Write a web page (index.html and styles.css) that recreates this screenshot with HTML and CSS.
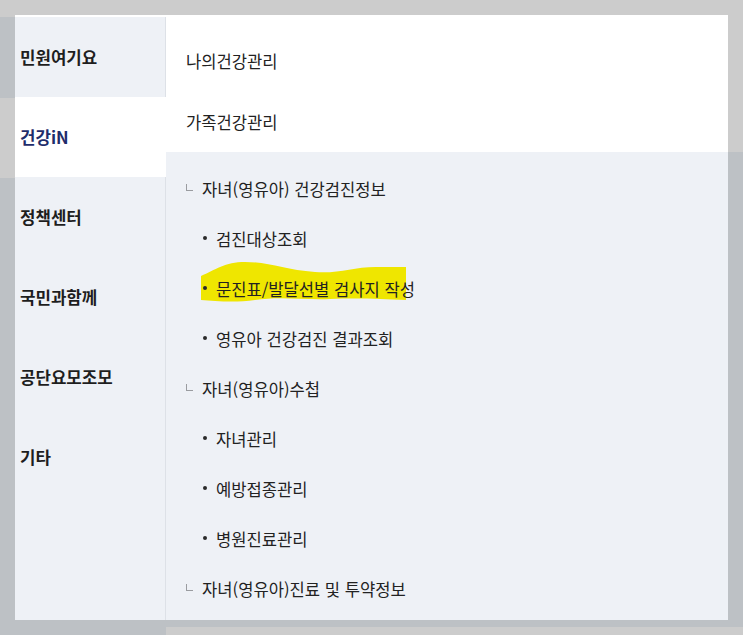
FILE: index.html
```html
<!DOCTYPE html>
<html lang="ko">
<head>
    <meta charset="UTF-8">
    <title>건강iN 메뉴</title>
    <link rel="stylesheet" href="styles.css">
</head>
<body>
    <!-- dimmed page behind the menu -->
    <div class="backdrop">
        <div class="bd-left">
            <div class="bd light" style="height: 17px"></div>
            <div class="bd dark" style="height: 81px"></div>
            <div class="bd light" style="height: 80px"></div>
            <div class="bd dark fill"></div>
        </div>
        <div class="bd-right">
            <div class="bd light" style="height: 152px"></div>
            <div class="bd dark" style="height: 475px"></div>
            <div class="bd light fill"></div>
        </div>
    </div>

    <!-- Menu Panel -->
    <div class="menu-panel">
        <ul class="gnb">
            <li>민원여기요</li>
            <li class="active">건강iN</li>
            <li>정책센터</li>
            <li>국민과함께</li>
            <li>공단요모조모</li>
            <li>기타</li>
        </ul>

        <div class="sub">
            <ul class="sub-top">
                <li>나의건강관리</li>
                <li>가족건강관리</li>
            </ul>

            <ul class="sub-list">
                <li class="depth1"><span class="corner"></span>자녀(영유아) 건강검진정보</li>
                <li class="depth2"><span class="dot"></span>검진대상조회</li>
                <li class="depth2 marked">
                    <svg class="marker" width="206" height="42" viewBox="0 0 206 42">
                        <path d="M0 14 C14 8,24 0,44 0 C69 0,84 8,114 10 C139 12,154 4,179 5 L205 5 L205 38 C179 37,159 36,129 37 C99 38,79 34,54 38 C34 41,14 39,0 38 Z" fill="#efe600"/>
                    </svg>
                    <span class="dot"></span><span class="label">문진표/발달선별 검사지 작성</span>
                </li>
                <li class="depth2"><span class="dot"></span>영유아 건강검진 결과조회</li>
                <li class="depth1"><span class="corner"></span>자녀(영유아)수첩</li>
                <li class="depth2"><span class="dot"></span>자녀관리</li>
                <li class="depth2"><span class="dot"></span>예방접종관리</li>
                <li class="depth2"><span class="dot"></span>병원진료관리</li>
                <li class="depth1"><span class="corner"></span>자녀(영유아)진료 및 투약정보</li>
            </ul>
        </div>
    </div>
</body>
</html>
```

FILE: styles.css
```css
/* Global Styles */
body {
    margin: 0;
    width: 743px;
    height: 635px;
    overflow: hidden;
    font-family: "Noto Sans CJK KR", "Noto Sans", sans-serif;
    color: #222;
    position: relative;
}

ul {
    list-style: none;
    margin: 0;
    padding: 0;
}

/* Backdrop */
.backdrop {
    display: flex;
    height: 635px;
}

.bd-left {
    width: 166px;
    display: flex;
    flex-direction: column;
}

.bd-right {
    flex: 1;
    display: flex;
    flex-direction: column;
}

.bd.light {
    background: #cccccc;
}

.bd.dark {
    background: #bdc1c5;
}

.bd.fill {
    flex: 1;
}

/* Menu Panel */
.menu-panel {
    position: absolute;
    left: 15px;
    top: 15px;
    width: 713px;
    height: 605px;
    box-sizing: border-box;
    padding-top: 2px;
    background: #fff;
    display: flex;
}

.gnb {
    width: 150px;
    background: #eef1f6;
    border-right: 1px solid #dde1e7;
}

.gnb li {
    height: 80px;
    display: flex;
    align-items: center;
    padding-left: 5px;
    font-size: 16.8px;
    font-weight: bold;
    color: #1e1e1e;
}

.gnb li.active {
    background: #fff;
    margin-right: -1px;
    color: #1f2d6b;
}

.sub {
    flex: 1;
    display: flex;
    flex-direction: column;
}

.sub-top {
    padding-top: 13px;
    background: #fff;
}

.sub-top li {
    height: 61px;
    display: flex;
    align-items: center;
    padding-left: 20px;
    font-size: 16.6px;
}

.sub-list {
    flex: 1;
    background: #eef1f6;
    padding-top: 12px;
}

.sub-list li {
    height: 50px;
    display: flex;
    align-items: center;
    font-size: 16.6px;
    position: relative;
}

.depth1 {
    padding-left: 20px;
}

.depth2 {
    padding-left: 37px;
}

.corner {
    width: 6px;
    height: 6px;
    border-left: 1px solid #9a9ca0;
    border-bottom: 1px solid #9a9ca0;
    margin-right: 9px;
    margin-bottom: 4px;
}

.dot {
    width: 4px;
    height: 4px;
    border-radius: 50%;
    background: #2a2a2a;
    margin-right: 9px;
    margin-bottom: 3px;
}

/* Highlighter stroke */
.marker {
    position: absolute;
    left: 35px;
    top: -2px;
}

.marked .dot,
.marked .label {
    position: relative;
}
```
